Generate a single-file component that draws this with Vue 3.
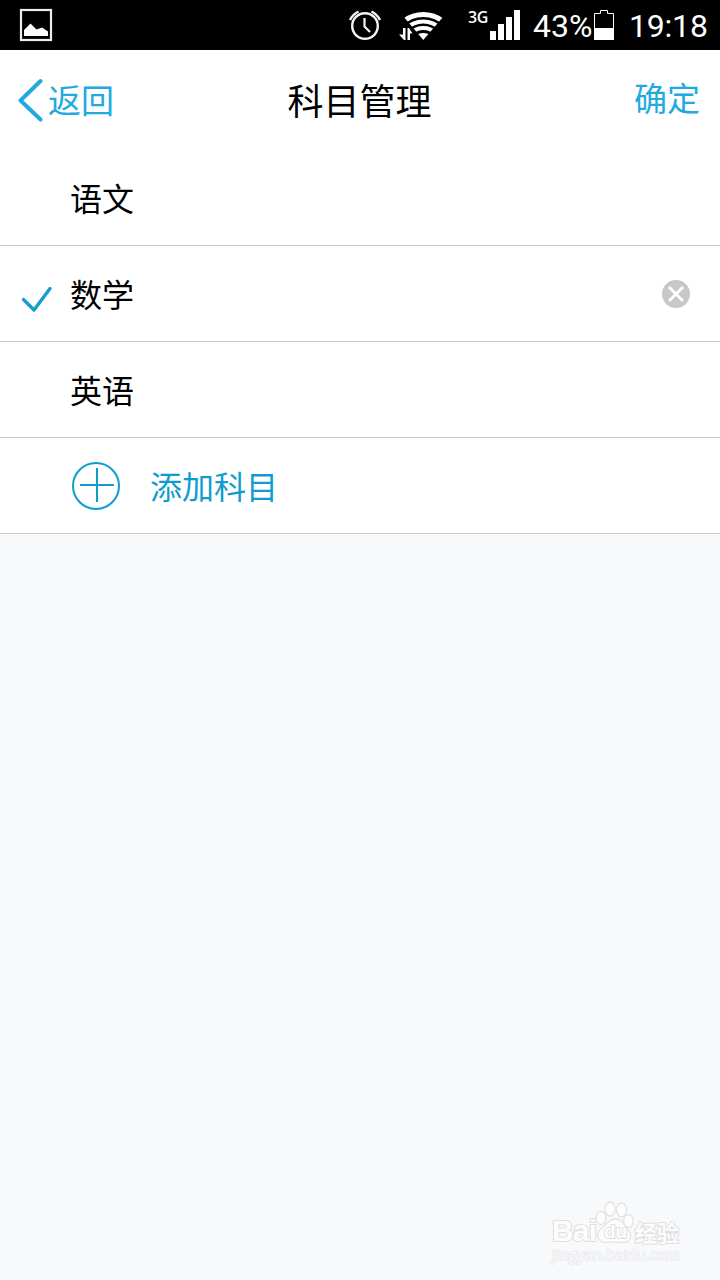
<script setup>
import { ref } from 'vue';

const subjects = ref(['语文', '数学', '英语']);
const selected = ref('数学');

const select = (name) => {
    selected.value = name;
};

const remove = (name) => {
    subjects.value = subjects.value.filter((s) => s !== name);
};
</script>

<template>
    <div class="page">
        <div class="status-bar">
            <svg class="picture" width="34" height="34" viewBox="0 0 34 34">
                <rect x="2" y="2" width="30" height="30" fill="none" stroke="#eee" stroke-width="2.2" />
                <path d="M5 28V22L11.500 15.500L17.500 21.500L23 19.500L29 23.500V28Z" fill="#fff" />
            </svg>
            <svg class="alarm" width="34" height="32" viewBox="0 0 34 32" fill="none" stroke="#f4f4f4">
                <circle cx="17" cy="17" r="12.800" stroke-width="2.400" />
                <path d="M16.500 9V17.500L22 23" stroke-width="2.200" />
                <path d="M2 11C4 7 6.500 4.500 10.500 2.500M32 11C30 7 27.500 4.500 23.500 2.500" stroke-width="2.500" />
            </svg>
            <svg class="wifi" width="44" height="30" viewBox="0 0 44 30" fill="none" stroke="#fff">
                <clipPath id="wedge">
                    <path d="M24.300 30L4 6V0H44V7Z" />
                </clipPath>
                <g clip-path="url(#wedge)">
                    <circle cx="24.300" cy="36" r="31.500" stroke-width="5" />
                    <circle cx="24.300" cy="36" r="24.500" stroke-width="4.200" />
                    <circle cx="24.300" cy="36" r="18" stroke-width="4" />
                    <circle cx="24.300" cy="36" r="13" fill="#fff" stroke="none" />
                </g>
                <path d="M4 18H6.500V30H5L0 24.500H4ZM8.500 30V18H10L13.500 23.500H11V30Z" fill="#fff" stroke="none" />
            </svg>
            <span class="network">3G</span>
            <svg class="signal" width="30" height="30" viewBox="0 0 30 30" fill="#fff">
                <path d="M0 21h6v9H0zM8 14h6v16H8zM16 7h6v23h-6zM24 0h6v30h-6z" />
            </svg>
            <span class="percent">43%</span>
            <svg class="battery" width="20" height="30" viewBox="0 0 20 30">
                <path d="M.500 29.500V3.500H6.500V.500H13.500V3.500H19.500V29.500Z" fill="none" stroke="#fff" />
                <path d="M0 18H20V30H0Z" fill="#fff" />
            </svg>
            <span class="time">19:18</span>
        </div>

        <header class="header">
            <div class="back">
                <svg width="26" height="44" viewBox="0 0 26 44">
                    <path d="M22.500 3L2.500 22.500L22.500 41.500" fill="none" stroke="#22aadf" stroke-width="4" stroke-linecap="round" stroke-linejoin="round" />
                </svg>
                <span>返回</span>
            </div>
            <h1 class="title">科目管理</h1>
            <div class="confirm">确定</div>
        </header>

        <ul class="list">
            <li v-for="name in subjects" :key="name" class="row" @click="select(name)">
                <div class="mark">
                    <svg v-if="name === selected" width="30" height="26" viewBox="0 0 30 26">
                        <path d="M1.500 12.500L12 23L28 1.500" fill="none" stroke="#159fd0" stroke-width="3.400" stroke-linecap="round" stroke-linejoin="round" />
                    </svg>
                </div>
                <span class="name">{{ name }}</span>
                <svg v-if="name === selected" class="remove" width="28" height="28" viewBox="0 0 28 28" @click.stop="remove(name)">
                    <circle cx="14" cy="14" r="14" fill="#c8c8c8" />
                    <path d="M7 7L21 21M21 7L7 21" stroke="#fff" stroke-width="2.800" />
                </svg>
            </li>
            <li class="row add">
                <svg width="48" height="48" viewBox="0 0 48 48" fill="none" stroke="#109ccd" stroke-width="2">
                    <circle cx="24" cy="24" r="23" />
                    <path d="M8 23H42M25 6V40" />
                </svg>
                <span class="add-text">添加科目</span>
            </li>
        </ul>

        <div class="watermark">
            <div class="brand">
                <span class="bai">Bai</span>
                <div class="paw">
                    <svg width="40" height="44" viewBox="0 0 40 44" fill="#fdfdfe" stroke="#e1e3e5" stroke-width="1.300">
                        <ellipse cx="6" cy="17" rx="5" ry="6.500" />
                        <ellipse cx="15" cy="8" rx="5" ry="7" />
                        <ellipse cx="26.500" cy="9" rx="5" ry="7" />
                        <ellipse cx="33.500" cy="20" rx="4.800" ry="6.500" />
                        <path d="M20 18C15 18 12 22 8 26C3 30 1 34 4 38C7 43 13 41 20 41C26 41 32 43 35 38C37 33 34 30 31 26C27 21 25 18 20 18Z" />
                    </svg>
                    <span class="du">du</span>
                </div>
                <span class="jingyan">经验</span>
            </div>
            <div class="site">jingyan.baidu.com</div>
        </div>
    </div>
</template>

<style>
body {
    margin: 0;
    background: #f7f9fb;
}
</style>

<style scoped>
.page {
    position: relative;
    width: 720px;
    height: 1280px;
    overflow: hidden;
    background: #f7f9fb;
    font-family: "Noto Sans CJK SC", sans-serif;
}

.status-bar {
    display: flex;
    align-items: flex-start;
    box-sizing: border-box;
    height: 50px;
    padding-left: 19px;
    background: #000;
    color: #fff;
    font-family: Roboto, sans-serif;
    white-space: nowrap;
}

.status-bar svg {
    flex: none;
}

.picture {
    margin-top: 8px;
}

.alarm {
    margin: 9px 0 0 295px;
}

.wifi {
    margin: 10px 0 0 17px;
}

.network {
    width: 22px;
    margin: 8px 0 0 25px;
    font: 600 16px/18px "Open Sans", sans-serif;
    letter-spacing: -0.3px;
}

.signal {
    margin-top: 10px;
}

.percent {
    width: 61px;
    margin: 7px 0 0 13px;
    font-size: 32px;
    line-height: 38px;
}

.battery {
    margin-top: 10px;
}

.time {
    margin: 7px 0 0 15px;
    font-size: 32px;
    line-height: 38px;
    letter-spacing: -0.2px;
}

.header {
    display: grid;
    grid-template-columns: 1fr auto 1fr;
    align-items: center;
    height: 100px;
    padding: 0 20px 0 18px;
    background: #fff;
    color: #22aadf;
    font-size: 33px;
}

.back {
    display: flex;
    align-items: center;
    gap: 4px;
}

.back span {
    padding-bottom: 2px;
}

.title {
    margin: 0;
    padding: 0 0 3px 1px;
    color: #000;
    font-size: 36px;
    font-weight: 400;
}

.confirm {
    padding-bottom: 6px;
    text-align: right;
}

.list {
    margin: 0;
    padding: 0;
    list-style: none;
}

.row {
    display: flex;
    align-items: center;
    box-sizing: border-box;
    height: 96px;
    padding-right: 30px;
    border-bottom: 1px solid #c8c8c8;
    background: #fff;
    color: #000;
    font-size: 32px;
}

.mark {
    width: 48px;
    padding: 10px 0 0 22px;
}

.name {
    flex: 1;
    padding-bottom: 2px;
}

.add {
    gap: 30px;
    padding-left: 72px;
    color: #109ccd;
}

.add-text {
    padding-bottom: 2px;
}

.watermark {
    position: absolute;
    left: 552px;
    top: 1201px;
    color: #fdfdfe;
    -webkit-text-stroke: 2px #dddfe1;
    paint-order: stroke fill;
}

.brand {
    display: flex;
    align-items: flex-end;
    height: 44px;
}

.bai {
    width: 43px;
    font: bold 30px/28px "Liberation Sans", sans-serif;
    letter-spacing: -0.8px;
}

.paw {
    position: relative;
    width: 40px;
    height: 44px;
}

.paw svg {
    paint-order: normal;
}

.du {
    position: absolute;
    left: 9px;
    top: 20px;
    font: bold 19px/22px "Liberation Sans", sans-serif;
}

.jingyan {
    font-size: 22px;
    font-weight: 700;
    line-height: 26px;
    padding-bottom: 1px;
}

.site {
    font: 15px/19px "Open Sans", sans-serif;
    -webkit-text-stroke: 1.2px #e0e2e4;
}
</style>
